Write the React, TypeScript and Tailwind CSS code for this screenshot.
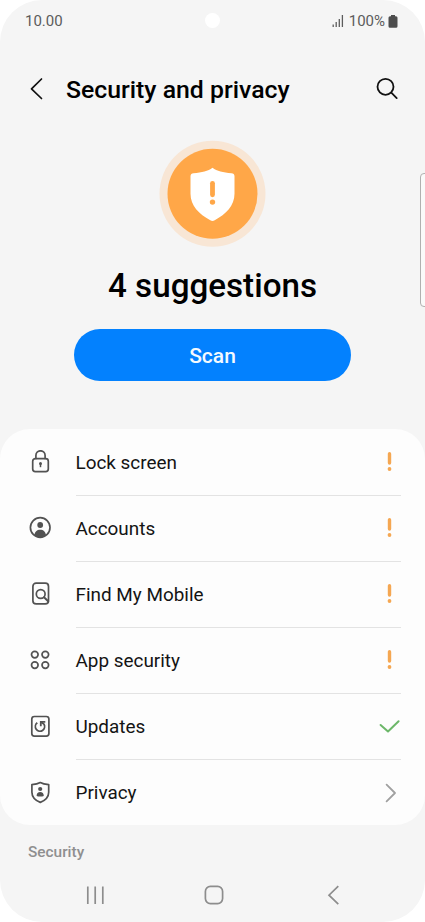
import React from 'react';

type Status = 'warn' | 'ok' | 'link';

interface Row {
  label: string;
  icon: React.ReactNode;
  status: Status;
}

const Icon: React.FC<{ children: React.ReactNode }> = ({ children }) => (
  <svg
    width="24"
    height="24"
    viewBox="0 0 24 24"
    fill="none"
    stroke="#525252"
    strokeWidth="1.7"
    strokeLinecap="round"
    strokeLinejoin="round"
    className="shrink-0 -mt-[2px]"
  >
    {children}
  </svg>
);

const LockIcon = () => (
  <Icon>
    <rect x="4.7" y="8.6" width="15.6" height="13" rx="2.6" />
    <path d="M7.9 8.4V5.4a4.6 4.6 0 0 1 9.2 0v3" />
    <circle cx="12.5" cy="13.6" r="1.5" fill="#525252" stroke="none" />
    <path d="M12.5 14v3.2" strokeWidth="1.5" strokeLinecap="butt" />
  </Icon>
);

const AccountIcon = () => (
  <Icon>
    <circle cx="12.2" cy="11.5" r="9.8" />
    <circle cx="12.2" cy="9" r="2.9" fill="#525252" stroke="none" />
    <path d="M6.4 19.4c.3-3.6 2.6-5.6 5.8-5.6s5.5 2 5.8 5.6c-3.2 2.6-8.4 2.6-11.6 0Z" fill="#525252" stroke="none" />
  </Icon>
);

const FindIcon = () => (
  <Icon>
    <rect x="4.9" y="1.2" width="15.6" height="20.7" rx="3.2" />
    <circle cx="12.7" cy="12" r="4.4" />
    <path d="m16 15.2 4.2 4" strokeWidth="2" />
  </Icon>
);

const AppsIcon = () => (
  <Icon>
    <circle cx="6.8" cy="6.6" r="3.3" />
    <circle cx="17.3" cy="6.6" r="3.3" />
    <circle cx="6.8" cy="17.1" r="3.3" />
    <circle cx="17.3" cy="17.1" r="3.3" />
  </Icon>
);

const UpdateIcon = () => (
  <Icon>
    <rect x="3.8" y="2.5" width="17.1" height="19.7" rx="2.6" />
    <path d="M9.3 8.8a4.6 4.6 0 1 0 6.6 1.3L13.4 8.2" strokeWidth="1.8" strokeLinecap="butt" />
    <path d="M17.3 7.9h-4.5v4.4" strokeWidth="1.8" strokeLinecap="butt" strokeLinejoin="miter" />
  </Icon>
);

const PrivacyIcon = () => (
  <Icon>
    <path d="M12.3 2.5c2 1.2 5 1.9 8.4 2.1v7.6c0 4.4-3.6 8.2-8.4 10.2-4.8-2-8.4-5.8-8.4-10.2V4.6c3.4-.2 6.4-.9 8.4-2.1Z" />
    <circle cx="12.2" cy="9" r="2.1" fill="#525252" stroke="none" />
    <path d="M8.6 15.9c0-2.5 1.4-3.9 3.6-3.9s3.6 1.4 3.6 3.9c-2 .9-5.2.9-7.2 0Z" fill="#525252" stroke="none" />
  </Icon>
);

const rows: Row[] = [
  { label: 'Lock screen', icon: <LockIcon />, status: 'warn' },
  { label: 'Accounts', icon: <AccountIcon />, status: 'warn' },
  { label: 'Find My Mobile', icon: <FindIcon />, status: 'warn' },
  { label: 'App security', icon: <AppsIcon />, status: 'warn' },
  { label: 'Updates', icon: <UpdateIcon />, status: 'ok' },
  { label: 'Privacy', icon: <PrivacyIcon />, status: 'link' },
];

const StatusMark: React.FC<{ status: Status }> = ({ status }) => (
  <svg
    width="24"
    height="24"
    viewBox="0 0 24 24"
    fill="none"
    strokeLinecap="round"
    strokeLinejoin="round"
    className="-mt-px"
  >
    {status === 'warn' && (
      <>
        <path d="M12.5 3.7v9.4" stroke="#f5a752" strokeWidth="3.4" />
        <circle cx="12.5" cy="19" r="1.9" fill="#f5a752" />
      </>
    )}
    {status === 'ok' && <path d="m3.6 11 7.4 6.5L21.6 7.2" stroke="#6cb769" strokeWidth="2" />}
    {status === 'link' && <path d="m9.6 3.6 8.4 8.4-8.4 8.4" stroke="#a0a0a0" strokeWidth="1.8" />}
  </svg>
);

const StatusBar = () => (
  <div className="grid h-[42px] grid-cols-3 items-center pl-[25px] pr-[27px] text-[15px] text-[#5c5c5c]">
    <span>10.00</span>
    <span className="-mt-[2px] ml-[2px] size-[15px] justify-self-center rounded-full bg-white" />
    <div className="flex items-center justify-end">
      <svg width="12" height="12" viewBox="0 0 12 12" stroke="#5c5c5c" strokeWidth="1.3" className="mr-[5px]">
        <path d="M1.2 9.5V12M4.2 7v5M7.3 4v8M10.4 0v12" />
      </svg>
      <span>100%</span>
      <svg width="10" height="13" viewBox="0 0 10 13" fill="#4d4d4d" className="ml-[3px]">
        <path d="M3 0h4v1.2h1a1.5 1.5 0 0 1 1.5 1.5v8.5A1.5 1.5 0 0 1 8 12.7H2A1.5 1.5 0 0 1 .5 11.2V2.7A1.5 1.5 0 0 1 2 1.2h1Z" />
      </svg>
    </div>
  </div>
);

const Header = () => (
  <header className="flex h-[94px] items-center pl-[30px] pr-[26px]">
    <svg
      width="14"
      height="24"
      viewBox="0 0 14 24"
      fill="none"
      stroke="#111"
      strokeWidth="1.7"
      strokeLinecap="round"
      strokeLinejoin="round"
    >
      <path d="M11.5 2 1.5 11.8l10 9.7" />
    </svg>
    <h1 className="ml-[22px] mt-[3px] flex-1 text-[24.8px] font-medium leading-none text-black">Security and privacy</h1>
    <svg width="24" height="24" viewBox="0 0 24 24" fill="none" stroke="#111" strokeWidth="1.8" strokeLinecap="round">
      <circle cx="10.5" cy="9.8" r="8" />
      <path d="m16.3 15.7 5.4 5.4" />
    </svg>
  </header>
);

const App: React.FC = () => {
  return (
    <div className="h-[922px] w-[425px] overflow-hidden bg-white font-['Roboto',sans-serif]">
      <div className="relative flex h-full flex-col overflow-hidden rounded-[42px] bg-[#f5f5f5]">
        <StatusBar />
        <Header />

        {/* Edge panel handle */}
        <div className="absolute left-[420px] top-[173px] h-[134px] w-3 rounded-[4px] border border-[#b0b0b0] bg-[#fafafa]" />

        <section className="flex h-[293px] flex-col items-center pt-[4px]">
          <svg width="108" height="108" viewBox="0.5 0.2 108 108">
            <circle cx="54" cy="54" r="53" fill="#f8e6d5" />
            <circle cx="54" cy="54" r="45" fill="#ffa748" />
            <path
              d="M54 28c4.5 3.2 10.5 5 19 5.4 1.8.1 3 1.2 3 3V54c0 12-8.5 20.5-19.8 26.4a4 4 0 0 1-4.4 0C40.5 74.5 32 66 32 54V36.4c0-1.8 1.2-2.9 3-3C43.5 33 49.5 31.2 54 28Z"
              fill="#fff"
            />
            <path d="M54 43.5v11.5" stroke="#ffa748" strokeWidth="4.8" strokeLinecap="round" />
            <circle cx="54" cy="62.3" r="2.7" fill="#ffa748" />
          </svg>
          <h2 className="mt-[18px] text-[33.2px] font-medium leading-[40px] text-black">4 suggestions</h2>
          <button className="mt-[23px] h-[52px] w-[277px] rounded-full bg-[#0381fe] pt-[3px] text-[21px] font-medium text-[#f4faff]">
            Scan
          </button>
        </section>

        <ul className="h-[396px] shrink-0 rounded-[30px] bg-[#fdfdfd] pt-px">
          {rows.map((row, i) => (
            <li key={row.label} className="flex h-[66px] items-center pl-7 pr-6">
              {row.icon}
              <div
                className={`ml-6 flex h-full flex-1 items-center justify-between ${
                  i < rows.length - 1 ? 'border-b border-[#e3e3e3]' : ''
                }`}
              >
                <span className="-ml-[0.5px] text-[18.9px] leading-7 text-[#141414]">{row.label}</span>
                <StatusMark status={row.status} />
              </div>
            </li>
          ))}
        </ul>

        <p className="ml-7 mt-[16px] text-[15.4px] font-medium leading-[22px] text-[#8f8f8f]">Security</p>

        <nav className="mt-[20px] flex h-6 items-center justify-between pl-[83px] pr-[80px]">
          <svg width="24" height="24" viewBox="0 0 24 24" stroke="#8d8d8d" strokeWidth="1.7">
            <path d="M4.8 3.5v17.5M12.2 3.5v17.5M19.8 3.5v17.5" />
          </svg>
          <svg width="24" height="24" viewBox="0 0 24 24" fill="none" stroke="#8d8d8d" strokeWidth="1.7">
            <rect x="3.4" y="3.4" width="17.2" height="17.2" rx="5" />
          </svg>
          <svg width="24" height="24" viewBox="0 0 24 24" fill="none" stroke="#8d8d8d" strokeWidth="1.7">
            <path d="m17.3 3.2-9.3 9 9.3 9" />
          </svg>
        </nav>
      </div>
    </div>
  );
};

export default App;
